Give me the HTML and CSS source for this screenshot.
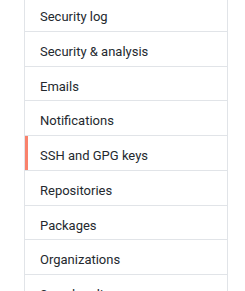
FILE: index.html
```html
<!DOCTYPE html>
<html lang="en">
<head>
    <meta charset="UTF-8">
    <meta name="viewport" content="width=device-width, initial-scale=1.0">
    <title>Settings menu</title>
    <link rel="stylesheet" href="styles.css">
</head>
<body>
    <nav class="menu">
        <a class="menu-item" href="#">Security log</a>
        <a class="menu-item" href="#">Security &amp; analysis</a>
        <a class="menu-item" href="#">Emails</a>
        <a class="menu-item" href="#">Notifications</a>
        <a class="menu-item selected" href="#">SSH and GPG keys</a>
        <a class="menu-item" href="#">Repositories</a>
        <a class="menu-item" href="#">Packages</a>
        <a class="menu-item" href="#">Organizations</a>
        <a class="menu-item" href="#">Saved replies</a>
    </nav>
</body>
</html>
```

FILE: styles.css
```css
body {
    font-family: Roboto, "Open Sans", Arial, sans-serif;
    background-color: #fff;
    margin: 0;
    padding: 0;
    overflow: hidden;
}
.menu {
    width: 202px;
    margin: -2.7px 0 0 24px;
    border: 1px solid #e1e4e8;
    border-top: none;
    display: flex;
    flex-direction: column;
}
.menu-item {
    position: relative;
    display: block;
    padding: 9px 15px 3px;
    line-height: 21.71px;
    font-size: 13px;
    color: #24292e;
    text-decoration: none;
    border-top: 1px solid #e1e4e8;
}
.menu-item:first-child {
    border-top: none;
}
.menu-item.selected::before {
    content: "";
    position: absolute;
    top: 0;
    bottom: 0;
    left: 0;
    width: 3px;
    background-color: #f9826c;
}
```
